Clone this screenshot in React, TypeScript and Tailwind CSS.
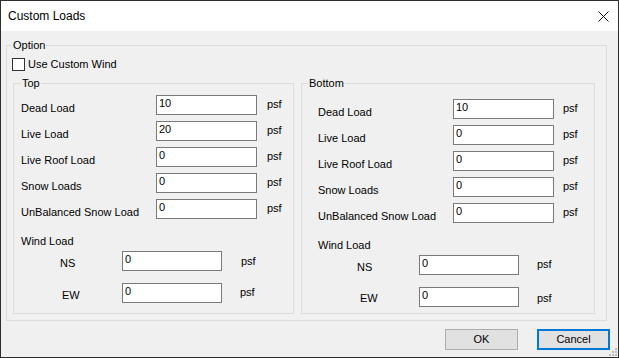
import React from 'react';

const labelFont = "font-['Liberation_Sans',Arial,sans-serif] text-[11px] leading-[13px] text-black";

type RowProps = { label: string; value: string; psfGap: string };

const LoadRow: React.FC<RowProps> = ({ label, value, psfGap }) => (
    <div className="flex h-[20px] items-start">
        <span className="w-[135px] mt-[7px] whitespace-nowrap">{label}</span>
        <input
            readOnly
            defaultValue={value}
            className={`w-[101px] h-[20px] border border-[#7a7a7a] bg-white px-[2px] pt-0 pb-[5px] outline-none ${labelFont}`}
        />
        <span className={`${psfGap} mt-[3px]`}>psf</span>
    </div>
);

type WindProps = { label: string; labelPad: string; labelTop: string; psfGap: string; psfTop: string };

const WindRow: React.FC<WindProps> = ({ label, labelPad, labelTop, psfGap, psfTop }) => (
    <div className="flex h-[20px] items-start">
        <span className={`w-[101px] ${labelPad} ${labelTop}`}>{label}</span>
        <input
            readOnly
            defaultValue="0"
            className={`w-[100px] h-[20px] border border-[#7a7a7a] bg-white px-[2px] pt-0 pb-[5px] outline-none ${labelFont}`}
        />
        <span className={`${psfGap} ${psfTop}`}>psf</span>
    </div>
);

export default function App() {
    const top = [
        ['Dead Load', '10'],
        ['Live Load', '20'],
        ['Live Roof Load', '0'],
        ['Snow Loads', '0'],
        ['UnBalanced Snow Load', '0'],
    ];
    const bottom = [
        ['Dead Load', '10'],
        ['Live Load', '0'],
        ['Live Roof Load', '0'],
        ['Snow Loads', '0'],
        ['UnBalanced Snow Load', '0'],
    ];

    return (
        <div className={`relative w-[619px] h-[358px] border border-[#2e2e2e] bg-[#f0f0f0] flex flex-col ${labelFont}`}>
            {/* title bar */}
            <div className="h-[30px] bg-white flex items-center justify-between pl-[7px] pr-[9px]">
                <span className="font-['Liberation_Sans',Arial,sans-serif] text-[12px] text-black">Custom Loads</span>
                <svg width="11" height="11" viewBox="0 0 11 11" className="mt-[1px]">
                    <path d="M0.5 0.5 L10.5 10.5 M10.5 0.5 L0.5 10.5" stroke="#111" strokeWidth="1" />
                </svg>
            </div>

            <fieldset className="mt-[8px] ml-[5px] w-[601px] h-[282px] border border-[#dcdcdc] p-0">
                <legend className="ml-[5px] px-px">Option</legend>

                <label className="flex items-center ml-[5px] mt-[6px] h-[13px]">
                    <span className="w-[13px] h-[13px] border border-[#333] bg-white" />
                    <span className="ml-[3px]">Use Custom Wind</span>
                </label>

                <div className="flex ml-[6px] mt-[6px] gap-[7px]">
                    <fieldset className="w-[281px] h-[237px] border border-[#dcdcdc] p-0">
                        <legend className="ml-[7px] px-px">Top</legend>
                        <div className="pl-[7px] pt-[5px] flex flex-col">
                            <div className="flex flex-col gap-[6px]">
                                {top.map(([l, v]) => (
                                    <LoadRow key={l} label={l} value={v} psfGap="ml-[10px]" />
                                ))}
                            </div>
                            <span className="mt-[16px]">Wind Load</span>
                            <div className="mt-[3px] flex flex-col gap-[12px]">
                                <WindRow label="NS" labelPad="pl-[39px]" labelTop="mt-[6px]" psfGap="ml-[19px]" psfTop="mt-[4px]" />
                                <WindRow label="EW" labelPad="pl-[41px]" labelTop="mt-[6px]" psfGap="ml-[18px]" psfTop="mt-[3px]" />
                            </div>
                        </div>
                    </fieldset>

                    <fieldset className="w-[294px] h-[237px] border border-[#dcdcdc] p-0">
                        <legend className="ml-[6px] px-px">Bottom</legend>
                        <div className="pl-[16px] pt-[9px] flex flex-col">
                            <div className="flex flex-col gap-[6px]">
                                {bottom.map(([l, v]) => (
                                    <LoadRow key={l} label={l} value={v} psfGap="ml-[9px]" />
                                ))}
                            </div>
                            <span className="mt-[16px]">Wind Load</span>
                            <div className="mt-[3px] flex flex-col gap-[12px]">
                                <WindRow label="NS" labelPad="pl-[39px]" labelTop="mt-[6px]" psfGap="ml-[18px]" psfTop="mt-[3px]" />
                                <WindRow label="EW" labelPad="pl-[42px]" labelTop="mt-[5px]" psfGap="ml-[18px]" psfTop="mt-[5px]" />
                            </div>
                        </div>
                    </fieldset>
                </div>
            </fieldset>

            <div className="mt-[8px] flex justify-end gap-[19px] pr-[8px]">
                <button className="w-[73px] h-[21px] bg-[#e1e1e1] border border-[#adadad] text-center">OK</button>
                <button className="w-[73px] h-[21px] bg-[#e1e1e1] border-2 border-[#0078d7] text-center">Cancel</button>
            </div>

            {/* size grip */}
            <svg width="8" height="8" viewBox="0 0 8 8" className="absolute right-[1px] bottom-[1px]">
                <rect x="6" y="0" width="2" height="2" fill="#bcbcbc" />
                <rect x="3" y="3" width="2" height="2" fill="#bcbcbc" />
                <rect x="6" y="3" width="2" height="2" fill="#bcbcbc" />
                <rect x="0" y="6" width="2" height="2" fill="#bcbcbc" />
                <rect x="3" y="6" width="2" height="2" fill="#bcbcbc" />
                <rect x="6" y="6" width="2" height="2" fill="#bcbcbc" />
            </svg>
        </div>
    );
}
